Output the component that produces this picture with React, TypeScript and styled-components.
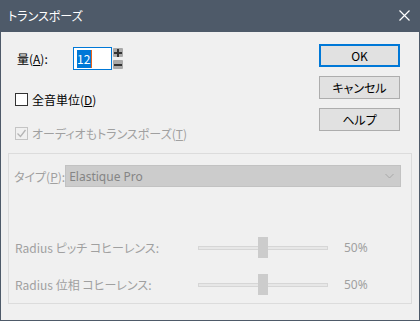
import styled, { createGlobalStyle } from "styled-components";

const GlobalStyle = createGlobalStyle`
  html, body {
    margin: 0;
    padding: 0;
  }
  body {
    background: #f0f0f0;
    font-family: "Noto Sans CJK JP", "Noto Sans", sans-serif;
    font-size: 12px;
    font-feature-settings: "palt";
  }
`;

const Window = styled.div`
  width: 420px;
  height: 321px;
  box-sizing: border-box;
  border: 1px solid #4e5a69;
  border-top: none;
  display: flex;
  flex-direction: column;
  background: #f0f0f0;
`;

const TitleBar = styled.div`
  height: 31px;
  flex: none;
  background: #4e5a69;
  display: flex;
  align-items: center;
  justify-content: space-between;
  padding: 0 9px 1px 7px;
  color: #ffffff;
`;

const Body = styled.div`
  flex: 1;
  display: flex;
  flex-direction: column;
  padding: 0 7px 17px 7px;
`;

const TopArea = styled.div`
  height: 121px;
  display: flex;
  justify-content: space-between;
`;

const LeftCol = styled.div`
  display: flex;
  flex-direction: column;
  padding-left: 7px;
`;

const AmountRow = styled.div`
  margin-top: 15px;
  height: 23px;
  display: flex;
  align-items: center;
  padding-left: 2px;
`;

const AmountLabel = styled.span`
  width: 56px;
`;

const NumberBox = styled.div`
  width: 39px;
  height: 23px;
  box-sizing: border-box;
  border: 1px solid #0078d7;
  background: #ffffff;
  display: flex;
  align-items: center;
  padding-left: 3px;
`;

const Selected = styled.span`
  background: #0078d7;
  color: #ffffff;
  line-height: 18px;
  padding-right: 1px;
  border-right: 1px solid #e8641b;
`;

const Spin = styled.div`
  display: flex;
  flex-direction: column;
  gap: 3px;
  margin-left: 1px;
`;

const SpinButton = styled.div`
  width: 10px;
  height: 9px;
  border-radius: 1px;
  background: #a9a9a9;
  display: flex;
  align-items: center;
  justify-content: center;
`;

const CheckRow = styled.label<{ $top: number; $disabled?: boolean }>`
  margin-top: ${(p) => p.$top}px;
  height: 13px;
  display: flex;
  align-items: center;
  gap: 4px;
  color: ${(p) => (p.$disabled ? "#a0a0a0" : "#000000")};
  white-space: nowrap;
`;

const Box = styled.span<{ $disabled?: boolean }>`
  width: 13px;
  height: 13px;
  box-sizing: border-box;
  border: 1px solid ${(p) => (p.$disabled ? "#c4c4c4" : "#333333")};
  background: ${(p) => (p.$disabled ? "#f0f0f0" : "#ffffff")};
  display: flex;
  align-items: center;
  justify-content: center;
`;

const RightCol = styled.div`
  display: flex;
  flex-direction: column;
  gap: 9px;
  padding-top: 12px;
  margin-right: 12px;
`;

const Button = styled.div<{ $primary?: boolean }>`
  width: 81px;
  height: 23px;
  box-sizing: border-box;
  background: #e1e1e1;
  border: ${(p) => (p.$primary ? "2px solid #0078d7" : "1px solid #adadad")};
  display: flex;
  align-items: center;
  justify-content: center;
  color: #000000;
`;

const Group = styled.div`
  height: 151px;
  box-sizing: border-box;
  border: 1px solid #dcdcdc;
  padding: 11px 10px 0 5px;
  display: flex;
  flex-direction: column;
  color: #a0a0a0;
`;

const TypeRow = styled.div`
  display: flex;
  align-items: center;
  justify-content: space-between;
  white-space: nowrap;
`;

const Combo = styled.div`
  flex: none;
  width: 336px;
  height: 22px;
  box-sizing: border-box;
  background: #cccccc;
  border: 1px solid #c2c2c2;
  display: flex;
  align-items: center;
  justify-content: space-between;
  padding: 0 6px 0 3px;
  color: #858585;
  font-family: "Noto Sans", sans-serif;
`;

const Sliders = styled.div`
  margin-top: 50px;
  padding-left: 1px;
  display: grid;
  grid-template-columns: 167px 130px auto;
  column-gap: 16px;
  row-gap: 16px;
  align-items: center;
`;

const SliderLabel = styled.span`
  white-space: nowrap;
`;

const SliderBox = styled.div`
  position: relative;
  height: 21px;
  display: flex;
  align-items: center;
`;

const Track = styled.div`
  width: 100%;
  height: 4px;
  box-sizing: border-box;
  background: #e7e7e7;
  border: 1px solid #d6d6d6;
`;

const Thumb = styled.div`
  position: absolute;
  top: 0;
  width: 10px;
  height: 21px;
  margin-left: -5px;
  background: #cccccc;
`;

const Value = styled.span`
  font-family: "Noto Sans", sans-serif;
`;

function Slider({ label, value }: { label: React.ReactNode; value: number }) {
  return (
    <>
      <SliderLabel>{label}</SliderLabel>
      <SliderBox>
        <Track />
        <Thumb style={{ left: `${value}%` }} />
      </SliderBox>
      <Value>{value}%</Value>
    </>
  );
}

export default function App() {
  return (
    <>
      <GlobalStyle />
      <Window>
        <TitleBar>
          <span>トランスポーズ</span>
          <svg width="11" height="11" viewBox="0 0 11 11">
            <path d="M0.5 0.5 L10.5 10.5 M10.5 0.5 L0.5 10.5" stroke="#ffffff" strokeWidth="1.2" />
          </svg>
        </TitleBar>
        <Body>
          <TopArea>
            <LeftCol>
              <AmountRow>
                <AmountLabel>
                  量(<u>A</u>):
                </AmountLabel>
                <NumberBox>
                  <Selected>12</Selected>
                </NumberBox>
                <Spin>
                  <SpinButton>
                    <svg width="8" height="8" viewBox="0 0 8 8">
                      <path d="M0 4 H8 M4 0 V8" stroke="#333" strokeWidth="2" />
                    </svg>
                  </SpinButton>
                  <SpinButton>
                    <svg width="8" height="8" viewBox="0 0 8 8">
                      <path d="M0 4 H8" stroke="#333" strokeWidth="2" />
                    </svg>
                  </SpinButton>
                </Spin>
              </AmountRow>
              <CheckRow $top={23}>
                <Box />
                <span>
                  全音単位(<u>D</u>)
                </span>
              </CheckRow>
              <CheckRow $top={21} $disabled>
                <Box $disabled>
                  <svg width="11" height="11" viewBox="0 0 11 11">
                    <path d="M1.5 5.5 L4.5 8.5 L9.5 2" stroke="#b4b4b4" strokeWidth="1.3" fill="none" />
                  </svg>
                </Box>
                <span>
                  オーディオもトランスポーズ(<u>T</u>)
                </span>
              </CheckRow>
            </LeftCol>
            <RightCol>
              <Button $primary>OK</Button>
              <Button>キャンセル</Button>
              <Button>ヘルプ</Button>
            </RightCol>
          </TopArea>
          <Group>
            <TypeRow>
              <span>
                タイプ(<u>P</u>):
              </span>
              <Combo>
                <span>Elastique Pro</span>
                <svg width="9" height="6" viewBox="0 0 9 6">
                  <path d="M0.5 1 L4.5 5 L8.5 1" stroke="#a8a8a8" strokeWidth="1" fill="none" />
                </svg>
              </Combo>
            </TypeRow>
            <Sliders>
              <Slider label="Radius ピッチ コヒーレンス:" value={50} />
              <Slider label="Radius 位相 コヒーレンス:" value={50} />
            </Sliders>
          </Group>
        </Body>
      </Window>
    </>
  );
}
